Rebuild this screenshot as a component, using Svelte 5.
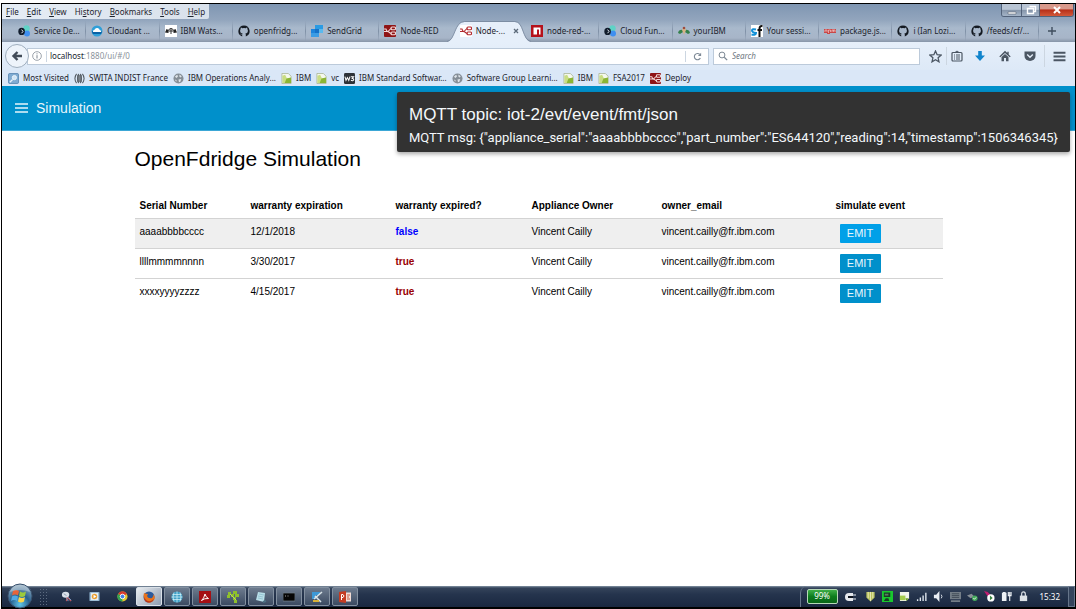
<script>
  const menus = ['File', 'Edit', 'View', 'History', 'Bookmarks', 'Tools', 'Help'];
  const accessIndex = { History: 2 };

  const tabs = [
    { icon: 'cloudfn', label: 'Service De...' },
    { icon: 'cloudant', label: 'Cloudant ...' },
    { icon: 'watson', label: 'IBM Wats...' },
    { icon: 'github', label: 'openfridg...' },
    { icon: 'sendgrid', label: 'SendGrid' },
    { icon: 'nodered', label: 'Node-RED' },
    { icon: 'noderedlight', label: 'Node-...', active: true },
    { icon: 'npm', label: 'node-red-...' },
    { icon: 'cloudfn', label: 'Cloud Fun...' },
    { icon: 'bee', label: 'yourIBM' },
    { icon: 'sf', label: 'Your sessi...' },
    { icon: 'npmwide', label: 'package.js...' },
    { icon: 'github', label: 'i (Ian Lozi...' },
    { icon: 'github', label: '/feeds/cf/...' }
  ];

  const bookmarks = [
    { icon: 'visited', label: 'Most Visited' },
    { icon: 'swita', label: 'SWITA INDIST France' },
    { icon: 'globe', label: 'IBM Operations Analy...' },
    { icon: 'page', label: 'IBM' },
    { icon: 'page', label: 'vc' },
    { icon: 'w3', label: 'IBM Standard Softwar...' },
    { icon: 'globe', label: 'Software Group Learni...' },
    { icon: 'page', label: 'IBM' },
    { icon: 'page', label: 'FSA2017' },
    { icon: 'nodered', label: 'Deploy' }
  ];

  const rows = [
    { serial: 'aaaabbbbcccc', date: '12/1/2018', expired: false, owner: 'Vincent Cailly', email: 'vincent.cailly@fr.ibm.com' },
    { serial: 'llllmmmmnnnn', date: '3/30/2017', expired: true, owner: 'Vincent Cailly', email: 'vincent.cailly@fr.ibm.com' },
    { serial: 'xxxxyyyyzzzz', date: '4/15/2017', expired: true, owner: 'Vincent Cailly', email: 'vincent.cailly@fr.ibm.com' }
  ];

  let selected = $state(0);

  const launchers = ['snip', 'media', 'chrome'];
  const apps = ['firefox', 'sphere', 'pdf', 'cross', 'notes', 'console', 'tools', 'ppt'];
  const tray = ['shield', 'monitor', 'note', 'signal', 'sound', 'device', 'usb', 'update', 'power', 'lock'];
</script>

{#snippet icon(name, size = 12)}
  <svg class="icon" width={size} height={size} viewBox="0 0 12 12" aria-hidden="true">
    {#if name === 'cloudfn'}
      <circle cx="8.5" cy="3.5" r="3.2" fill="#5fd3c6" /><circle cx="9" cy="8.5" r="3" fill="#3f8ff0" />
      <ellipse cx="3.6" cy="6.4" rx="3.3" ry="3.7" fill="#111c2c" /><path d="M3.6 4.6l1.4 1.8-1.4 1.8" fill="none" stroke="#dfe8f0" />
    {:else if name === 'cloudant'}
      <circle cx="6" cy="6" r="5.5" fill="#2f9fd8" /><path d="M1 6q5 2 10 0a5 5 0 0 1-1 3H2q-1-1-1-3z" fill="#0b62a4" /><path d="M2 7q-.5-2 1.500-2.300Q4.500 2.500 6.500 3q2 .3 2.200 2 2 .3 1.500 2z" fill="#fff" />
    {:else if name === 'watson'}
      <rect width="12" height="12" fill="#fff" /><path d="M0 7.500L1.500 4l2 1v3zM12 7.500L10.500 4l-2 1v3z" fill="#222" /><path d="M3.500 5.500Q4 3.500 6 3.500t2.500 2M6 3.500V9M3.500 6h5" fill="none" stroke="#333" />
    {:else if name === 'github'}
      <path d="M6 .5a5.6 5.6 0 0 0-1.8 10.9V9.8C2.600 10.100 2.400 9 2 8.600c.9 0 1.200 1 2.200.8.1-.5.3-.7.5-.9C2.900 8.200 2.100 7.300 2.100 5.700c0-.7.2-1.200.6-1.600-.1-.5-.1-1 .1-1.500.6 0 1.100.3 1.500.6a6 6 0 0 1 3.400 0c.4-.3.9-.6 1.500-.6.2.5.2 1 .1 1.500.4.4.6.9.6 1.600 0 1.600-.8 2.500-2.600 2.800.4.3.5.8.5 1.400v1.500A5.600 5.600 0 0 0 6 .5z" fill="#141a22" />
    {:else if name === 'sendgrid'}
      <path d="M0 4h4v8H0z" fill="#a4dcf5" /><path d="M4 0h8v4H4z" fill="#2a9be3" /><path d="M4 4h4v4H4z" fill="#1571c8" /><path d="M8 4h4v4H8z" fill="#59b9ee" /><path d="M0 8h8v4H0z" fill="#3a9ce5" /><path d="M0 4h4v4H0z" fill="#1c84dc" />
    {:else if name === 'nodered' || name === 'noderedlight'}
      <rect width="12" height="12" rx="1" fill={name === 'nodered' ? '#8f1416' : '#fff'} />
      <g fill="none" stroke={name === 'nodered' ? '#f3dada' : '#b32a2e'} stroke-width="1.1"><path d="M0 6.500h3q1.500 0 2.500-1.500t2-1.500M3 6.500q1.500 0 2.500 1t2 1M0 4h2l1 2.500" /><rect x="7" y="2" width="4.500" height="2.700" rx="1" /><rect x="7" y="7" width="4.500" height="2.700" rx="1" /></g>
    {:else if name === 'npm'}
      <path d="M0 0h12v12H0z" fill="#b5121b" /><path d="M2.500 2.500h7v7H8V4.500H6v5H2.500z" fill="#fff" />
    {:else if name === 'npmwide'}
      <path d="M0 4h12v4H6v1H3V8H0z" fill="#c94747" /><path d="M1 7V5h2v2M4.500 8V5h2v2M8 7V5h3v2M9.500 5v2" fill="none" stroke="#f7dede" stroke-width=".6" />
    {:else if name === 'bee'}
      <path d="M0 8q1-4 5-3v2l-3 2zM12 8q-1-4-5-3v2l3 2z" fill="#35804c" /><path d="M5 3h2l1 2-2 5-2-5z" fill="#d7b389" /><circle cx="6" cy="3" r="1.300" fill="#9e4b3c" />
    {:else if name === 'sf'}
      <path d="M0 0h12v12H0z" fill="#fff" /><path d="M5 4.500q-4-1-4 1t4 2.400q0 2.500-4.500 1.700" fill="none" stroke="#1190d8" stroke-width="2" /><path d="M11.500 1.200Q8.500.500 8.500 4v8M6.500 5h4.500" fill="none" stroke="#111" stroke-width="2" />
    {:else if name === 'visited'}
      <rect x=".5" y=".5" width="11" height="11" rx="1.500" fill="#7fabd2" stroke="#5d8ab5" /><circle cx="7" cy="5" r="2.300" fill="#cfe4f6" stroke="#eef5fb" /><path d="M5 7l-3 3" stroke="#e6f1fa" stroke-width="1.500" />
    {:else if name === 'swita'}
      <path d="M3.500 2h5v8h-5z" fill="#7c848c" /><g fill="none" stroke="#4c545c" stroke-width="1.100"><path d="M2.800 1Q-.8 6 2.800 11M9.200 1q3.600 5 0 10M5 1q-2 5 0 10M7 1q2 5 0 10" /></g>
    {:else if name === 'globe'}
      <circle cx="6" cy="6" r="5.500" fill="#858e97" /><path d="M2 4l2.500-2 1 1.500-1.500 2zM7 1.500l2.500 2-1 1.500-1.500-1zM6 7l3-.5-1 3-1.500.5zM2 7l2 1-.5 1.500z" fill="#dfe5ea" />
    {:else if name === 'page'}
      <path d="M1 .5h7l3 3v8H1z" fill="#f5f8ee" stroke="#a3b08c" stroke-width=".8" /><path d="M1.500 11V3l3-1 2 4h4.500v5z" fill="#c9dd83" /><path d="M6 6l5-1v6H4z" fill="#8bb534" />
    {:else if name === 'w3'}
      <rect width="12" height="12" rx="1.500" fill="#2d3238" /><path d="M1 4l1.200 4L3.700 5l1.500 3L6.500 4M7.500 4h3L9 6q2 0 1.500 1.500T7.500 8" fill="none" stroke="#fff" stroke-width="1.100" />
    {:else if name === 'snip'}
      <path d="M6 6l5 5M7 5l-1 6" stroke="#b8545c" stroke-width="1.500" /><ellipse cx="5" cy="4" rx="4" ry="3.300" fill="#d9e1ea" /><path d="M3 3l3 2" stroke="#8a9aae" /><path d="M6 8l2 3M8 7l3 3" stroke="#7ea4cf" />
    {:else if name === 'media'}
      <rect x=".5" y="1" width="11" height="10" rx="1" fill="#8fb4cf" /><rect x="2" y="2" width="8" height="8" fill="#e6eef2" /><circle cx="6" cy="6" r="3" fill="#e9a034" /><path d="M5 4l3 2-3 2z" fill="#fff" />
    {:else if name === 'chrome'}
      <circle cx="6" cy="6" r="5.500" fill="#e5c62e" /><path d="M6 6L1.200 3.200A5.500 5.500 0 0 1 10.800 3.200z" fill="#d83a2e" /><path d="M6 6L1.200 3.200A5.500 5.500 0 0 0 6 11.500z" fill="#32a350" /><circle cx="6" cy="6" r="2.500" fill="#4481e8" stroke="#fff" />
    {:else if name === 'firefox'}
      <circle cx="6" cy="6" r="5.500" fill="#2c5a9c" /><path d="M1 2q2 1 4 1l-1 2q1 3 5 2 2-2 1-4 3 3 1 6-3 4-7 2Q-.5 8 1 2z" fill="#e9731c" /><path d="M1 6q2 5 7 4l3-2q-2 4-6 3.500T1 6z" fill="#b8361b" />
    {:else if name === 'sphere'}
      <circle cx="6" cy="6" r="5.500" fill="#3f9fc6" /><path d="M6 .5v11M.5 6h11M3 1.500q-2 4.500 0 9M9 1.500q2 4.500 0 9M1.500 3.500h9M1.500 8.500h9" fill="none" stroke="#d9f5fa" stroke-width=".7" />
    {:else if name === 'pdf'}
      <rect width="12" height="12" fill="#a50f14" /><path d="M2.500 9.500Q5 7.500 6 3q.5 3 3.500 4.500Q5.500 7 2.500 9.500" fill="none" stroke="#fff" />
    {:else if name === 'cross'}
      <path d="M1 1h3v3H1zM6 0h4v3H6zM4 3h3v3H4zM8 3h4v3H8zM0 4h3v3H0zM6 6h3v3H6zM7 9h3v3H7z" fill="#8fc02c" /><path d="M3 3l6 6" stroke="#b9dd55" />
    {:else if name === 'notes'}
      <path d="M3 1l7 1-1 9-8-2z" fill="#b9dfe9" /><path d="M4 3l5 1M3 5l5 1M3 7l5 1" stroke="#8cbccc" stroke-width=".8" /><path d="M8 11l3-1" stroke="#4c7083" stroke-width="2" />
    {:else if name === 'console'}
      <rect y="2" width="12" height="8" fill="#050505" stroke="#74808c" stroke-width=".7" /><path d="M2 4l1 1-1 1M4 5h2" fill="none" stroke="#888" stroke-width=".6" />
    {:else if name === 'tools'}
      <path d="M1 1h8v3H5v4H1z" fill="#3d98d6" /><path d="M11 1L3 8M4 5l6 6" stroke="#dae4e8" stroke-width="1.600" /><path d="M2 10h6" stroke="#d7b139" stroke-width="2" />
    {:else if name === 'ppt'}
      <path d="M0 1l7-1v12l-7-1z" fill="#c43b22" /><path d="M7 1.500h5v9H7z" fill="#f1dcd5" /><path d="M2.500 9V3.500h1.500q2 1.500 0 3H2.500" fill="none" stroke="#fff" /><path d="M8 4h3M8 6h2M8 8h3" stroke="#c45c47" />
    {:else if name === 'shield'}
      <path d="M1.500 1h9v6L6 11.500 1.500 7z" fill="#b8c25e" /><path d="M6 1v10M3.500 1v7M8.500 1v7" stroke="#ebe9b8" />
    {:else if name === 'monitor'}
      <path d="M0 0h12v12H0z" fill="#19c82e" /><path d="M2 1.500h7v5H2zM4 8h3l1 3H2z" fill="#173b23" /><path d="M3 3h4v2H3z" fill="#5c7a64" />
    {:else if name === 'note'}
      <path d="M1 1h10v7l-3 3H1z" fill="#f2f5ea" /><path d="M1 5h6v5H1z" fill="#a5cd4c" /><path d="M7 8h4L8 11z" fill="#6a9c28" />
    {:else if name === 'signal'}
      <path d="M1 11V9h1.500v2zM4 11V7h1.500v4zM7 11V5h1.500v6zM10 11V2h1.500v9z" fill="#dfe6ee" />
    {:else if name === 'sound'}
      <path d="M1 4h2.500L7 0v12L3.500 8H1z" fill="#e9eef4" /><path d="M9 4q1.500 2 0 4" fill="none" stroke="#dfe6ee" />
    {:else if name === 'device'}
      <path d="M0 1h12v8H0zM1 10h10v2H1z" fill="#737d87" /><path d="M2 3h8M2 5h8M2 7h8" stroke="#3f4955" />
    {:else if name === 'usb'}
      <path d="M0 5l5-2 3 3-4 2z" fill="#899097" /><circle cx="8.500" cy="8" r="3" fill="#43a95b" /><path d="M7 8l1 1 2-2" fill="none" stroke="#fff" />
    {:else if name === 'update'}
      <path d="M0 0l4 1 4 4-4 1z" fill="#c01c70" /><circle cx="7.500" cy="7.500" r="4" fill="#fff" /><path d="M6.500 5l3 2.500-3 2.500z" fill="#37833f" />
    {:else if name === 'power'}
      <path d="M1 2h5v9H1zM2 1h3v1H2z" fill="#edf1f5" /><path d="M9.500 1v10M8 1v4h3V1" fill="none" stroke="#edf1f5" stroke-width="1.200" />
    {:else if name === 'lock'}
      <path d="M4 6V3.500Q4 1 6 1t2 2.500V6" fill="none" stroke="#dce1e6" stroke-width="1.300" /><rect x="2" y="5" width="8" height="6" fill="#dce1e6" />
    {:else if name === 'back'}
      <path d="M11 6H3M6.500 2L2.500 6l4 4" fill="none" stroke="#414b58" stroke-width="2.400" />
    {:else if name === 'info'}
      <circle cx="6" cy="6" r="5.200" fill="none" stroke="#7c858f" stroke-width=".9" /><path d="M6 5v4M6 2.800v1.200" stroke="#7c858f" stroke-width="1.200" />
    {:else if name === 'reload'}
      <path d="M9.800 8A4.200 4.200 0 1 1 9 3.200" fill="none" stroke="#7d8996" stroke-width="1.500" /><path d="M10.800 1v4.300H6.500z" fill="#7d8996" />
    {:else if name === 'search'}
      <circle cx="4.800" cy="4.800" r="3.500" fill="none" stroke="#7c8894" stroke-width="1.200" /><path d="M7.500 7.500l3.500 3.500" stroke="#7c8894" stroke-width="1.500" />
    {:else if name === 'star'}
      <path d="M6 .9l1.500 3.400 3.700.4-2.800 2.500.8 3.700L6 9l-3.200 1.900.8-3.700L.8 4.700l3.700-.4z" fill="none" stroke="#4b5663" stroke-width="1.200" />
    {:else if name === 'clipboard'}
      <rect x="1" y="2.500" width="10" height="8.500" rx="1" fill="none" stroke="#4b5663" stroke-width="1.200" /><path d="M4 2.500q2-3 4 0M3 5h1M5 5h4M3 7h1M5 7h4M3 9h1M5 9h4" fill="none" stroke="#4b5663" />
    {:else if name === 'download'}
      <path d="M4.200 1h3.600v4.500H11L6 11 1 5.500h3.200z" fill="#1184cc" />
    {:else if name === 'home'}
      <path d="M6 .8L.3 6.500l1 .8L6 3l4.700 4.300 1-.8-2-2V1.800H8.300v1.300z" fill="#4b5663" /><path d="M2.500 7L6 4l3.500 3v4.200H7V8H5v3.200H2.500z" fill="#4b5663" />
    {:else if name === 'pocket'}
      <path d="M.5 1.500h11V6a5.500 5 0 0 1-11 0z" fill="#4b5663" /><path d="M3.200 4.500L6 7.200l2.800-2.700" fill="none" stroke="#e4edf8" stroke-width="1.400" />
    {:else if name === 'menu'}
      <path d="M.5 2.500h11M.5 6h11M.5 9.500h11" stroke="#4b5663" stroke-width="1.800" />
    {/if}
  </svg>
{/snippet}

<div class="screen">
  <header class="browser">
    <div class="titlebar">
      <nav class="menus" aria-label="Menu bar">
        {#each menus as name}
          {@const i = accessIndex[name] ?? 0}
          <button>{name.slice(0, i)}<u>{name[i]}</u>{name.slice(i + 1)}</button>
        {/each}
      </nav>
      <div class="window">
        <button class="min" aria-label="Minimize"><svg width="16" height="12" viewBox="0 0 16 12"><path d="M4 8h8v2H4z" fill="#fff" stroke="#5d6774" stroke-width=".6" /></svg></button>
        <button class="max" aria-label="Restore"><svg width="16" height="12" viewBox="0 0 16 12"><path d="M6.500 2.500h6v5h-2M4.500 4.500h6v5h-6z" fill="none" stroke="#fff" stroke-width="1.400" /></svg></button>
        <button class="close" aria-label="Close"><svg width="16" height="12" viewBox="0 0 16 12"><path d="M5 3l6 6M11 3l-6 6" stroke="#fff" stroke-width="2" /></svg></button>
      </div>
    </div>

    <div class="tabs">
      {#each tabs as tab}
        <div class="tab" class:active={tab.active}>
          {#if tab.active}
            <svg class="shape" viewBox="0 0 82 21" preserveAspectRatio="none" aria-hidden="true">
              <path d="M0 21C8 20 7 1 17 1H66c9 0 7 19 16 20z" fill="#e6effa" />
              <path d="M0 20.500C8 20 7 .5 17 .5H66c9 0 7 19 16 20" fill="none" stroke="#75869c" stroke-width=".8" />
            </svg>
          {/if}
          <button class="label">{@render icon(tab.icon)}<span>{tab.label}</span></button>
          {#if tab.active}<button class="x" aria-label="Close tab"><svg width="6" height="6" viewBox="0 0 6 6"><path d="M1 1l4 4M5 1L1 5" stroke="#5c6a7a" stroke-width="1.300" /></svg></button>{/if}
        </div>
      {/each}
      <button class="newtab" aria-label="New tab"><svg width="8" height="8" viewBox="0 0 8 8"><path d="M4 0v8M0 4h8" stroke="#3f4d5e" stroke-width="1.400" /></svg></button>
    </div>

    <div class="toolbar">
      <button class="back" aria-label="Back">{@render icon('back')}</button>
      <div class="url">
        {@render icon('info', 10)}
        <i></i>
        <label for="address">localhost</label>
        <input id="address" value=":1880/ui/#/0" />
        <i></i>
        <button class="reload" aria-label="Reload">{@render icon('reload', 9)}</button>
      </div>
      <label class="search">{@render icon('search', 10)}<input placeholder="Search" aria-label="Search" /></label>
      <div class="actions">
        <button aria-label="Bookmark">{@render icon('star', 13)}</button>
        <i></i>
        <button aria-label="Library">{@render icon('clipboard')}</button>
        <button aria-label="Downloads">{@render icon('download')}</button>
        <button aria-label="Home">{@render icon('home')}</button>
        <button aria-label="Pocket">{@render icon('pocket')}</button>
        <i></i>
        <button aria-label="Open menu">{@render icon('menu', 13)}</button>
      </div>
    </div>

    <nav class="bookmarks" aria-label="Bookmarks">
      {#each bookmarks as mark}
        <a href="#/">{@render icon(mark.icon, 11)}<span>{mark.label}</span></a>
      {/each}
    </nav>
  </header>

  <div class="page">
    <header class="appbar">
      <button aria-label="Menu"><svg width="13" height="10" viewBox="0 0 13 10"><path d="M0 1h13M0 5h13M0 9h13" stroke="#e6f5fc" stroke-width="1.300" /></svg></button>
      <span>Simulation</span>
    </header>

    <div class="toast" role="status">
      <h2>MQTT topic: iot-2/evt/event/fmt/json</h2>
      <p>{'MQTT msg: {"appliance_serial":"aaaabbbbcccc","part_number":"ES644120","reading":14,"timestamp":1506346345}'}</p>
    </div>

    <main>
      <h1>OpenFdridge Simulation</h1>
      <table>
        <colgroup>
          <col class="c1" /><col class="c2" /><col class="c3" /><col class="c4" /><col class="c5" /><col class="c6" />
        </colgroup>
        <thead>
          <tr><th>Serial Number</th><th>warranty expiration</th><th>warranty expired?</th><th>Appliance Owner</th><th>owner_email</th><th>simulate event</th></tr>
        </thead>
        <tbody>
          {#each rows as row, i}
            <tr class:selected={selected === i}>
              <td>{row.serial}</td>
              <td>{row.date}</td>
              <td><b class:expired={row.expired}>{row.expired}</b></td>
              <td>{row.owner}</td>
              <td>{row.email}</td>
              <td class="action"><button onclick={() => (selected = i)}>EMIT</button></td>
            </tr>
          {/each}
        </tbody>
      </table>
    </main>
  </div>

  <footer class="taskbar">
    <button class="start" aria-label="Start">
      <svg width="26" height="26" viewBox="0 0 26 26">
        <defs>
          <radialGradient id="orb" cx="50%" cy="85%" r="80%"><stop offset="0" stop-color="#5fc6ea" /><stop offset=".5" stop-color="#27608f" /><stop offset="1" stop-color="#8ea9bd" /></radialGradient>
        </defs>
        <circle cx="13" cy="13" r="12" fill="url(#orb)" stroke="#38506c" />
        <path d="M6 8q3-2 6 0l-1 4.500q-3-2-6 0z" fill="#e9643a" /><path d="M13 8.500q3 2 6 0l-1 4.500q-3 2-6 0z" fill="#9ccb3c" />
        <path d="M5 13.500q3-2 6 0L10 18q-3-2-6 0z" fill="#52a8e4" /><path d="M12 14q3 2 6 0l-1 4.500q-3 2-6 0z" fill="#fbd648" />
        <path d="M3 9a10.500 10.500 0 0 1 20 0q-10-4-20 0z" fill="#fff" opacity=".3" />
      </svg>
    </button>
    <span class="grip"></span>
    <div class="launch">
      {#each launchers as name}<button aria-label={name}>{@render icon(name, 11)}</button>{/each}
    </div>
    <div class="apps">
      {#each apps as name, i}<button class:current={i === 0} aria-label={name}>{@render icon(name)}</button>{/each}
    </div>
    <div class="tray">
      <div class="battery"><span>99%</span></div>
      <svg class="plug" width="12" height="10" viewBox="0 0 12 10" aria-hidden="true"><path d="M1 5a4 4 0 0 1 4-4h4v8H5a4 4 0 0 1-4-4z" fill="#e6e9ee" /><path d="M9 3h3M9 7h3" stroke="#e6e9ee" stroke-width="1.200" /><path d="M4 5h5" stroke="#10161f" stroke-width="2" /></svg>
      <div class="status">
        {#each tray as name}<button aria-label={name}>{@render icon(name, 11)}</button>{/each}
      </div>
      <time>15:32</time>
      <button class="desktop" aria-label="Show desktop"></button>
    </div>
  </footer>
</div>

<style>
  :global(body) { background: #fff; }
  .screen {
    box-sizing: border-box;
    min-height: 100vh;
    border: 1px solid #000;
    border-top: 0;
    margin-left: 1px;
    display: flex;
    flex-direction: column;
    font-family: "Liberation Sans", Arial, sans-serif;
    color: #000;
  }
  .screen::before {
    content: "";
    height: 3px;
    background: #fff;
    border-bottom: 1px solid #000;
    margin: 0 -1px;
  }
  button {
    border: 0;
    padding: 0;
    margin: 0;
    background: none;
    font: inherit;
    color: inherit;
  }
  input {
    border: 0;
    padding: 0;
    min-width: 0;
    background: none;
    font: inherit;
    outline: 0;
  }
  svg { display: block; flex: none; }

  .browser {
    font: 8px/12px "Noto Sans", "Open Sans", sans-serif;
    color: #1c232c;
    background: linear-gradient(#7f96b2 0, #92a5bd 16px, #a9b9cc 24px, #a7b5c8 34px, #8795a8 38px);
  }
  .titlebar {
    height: 15px;
    display: flex;
    justify-content: space-between;
  }
  .menus {
    display: flex;
    gap: 8px;
    padding: 0 4px;
    background: linear-gradient(90deg, #e6edf5, #d9e1eb);
    border-radius: 0 0 2px 0;
  }
  .window {
    display: flex;
    height: 12px;
    margin-right: 1px;
    border-radius: 0 0 3px 3px;
    overflow: hidden;
    border: 1px solid #52627a;
    border-top: 0;
  }
  .window button {
    width: 18px;
    display: grid;
    place-items: center;
    background: linear-gradient(#b9c5d4 45%, #8494a9 50%, #a5b5c8);
    border-right: 1px solid #52627a;
  }
  .window .min { width: 20px; }
  .window .close {
    width: 33px;
    border: 0;
    background: linear-gradient(#d99a8c 40%, #b7301a 50%, #d2593a);
  }

  .tabs {
    display: flex;
    height: 23px;
    padding-left: 11px;
    box-sizing: border-box;
  }
  .tab {
    flex: 1 1 0;
    min-width: 0;
    display: flex;
    align-items: center;
    position: relative;
    border-right: 1px solid #8797ac;
    border-image: linear-gradient(transparent 10%, #7f90a6, transparent 95%) 1;
  }
  .tab:has(+ .active), .tab.active { border-color: transparent; border-image: none; }
  .label {
    position: relative;
    display: flex;
    align-items: center;
    gap: 4px;
    padding-left: 5px;
    min-width: 0;
    white-space: nowrap;
  }
  .shape {
    position: absolute;
    left: -6px;
    top: 2px;
    width: calc(100% + 12px);
    height: 21px;
  }
  .active .label { padding-left: 7px; }
  .x { position: relative; margin: 0 6px 0 auto; }
  .newtab {
    width: 36px;
    display: grid;
    place-items: center;
    padding-right: 10px;
  }

  .toolbar {
    height: 28px;
    display: flex;
    align-items: center;
    padding: 0 2px 0 3px;
    background: linear-gradient(#e6effa, #dde9f7);
  }
  .back {
    width: 24px;
    height: 24px;
    box-sizing: border-box;
    border: 1px solid #9faebe;
    border-radius: 50%;
    background: #eef4fb;
    display: grid;
    place-items: center;
    z-index: 1;
  }
  .toolbar i {
    width: 1px;
    align-self: stretch;
    margin: 2px 0;
    background: #ccd6e1;
  }
  .url, .search {
    box-sizing: border-box;
    height: 17px;
    display: flex;
    align-items: center;
    background: #fff;
    border: 1px solid #bccada;
  }
  .url {
    flex: 1;
    margin-left: -2px;
    padding-left: 4px;
    color: #20262e;
  }
  .url label { margin-left: 3px; }
  .url i:first-of-type { margin-left: 4px; }
  .url input { flex: 1; color: #8b939c; }
  .reload { width: 22px; display: grid; place-items: center; }
  .search { width: 207px; margin-left: 4px; padding-left: 4px; gap: 4px; }
  .search input { flex: 1; font-style: italic; }
  .search input::placeholder { color: #6e7781; opacity: 1; }
  .actions {
    display: flex;
    align-items: center;
    height: 22px;
    margin-left: 5px;
  }
  .actions button { width: 25px; display: grid; place-items: center; }
  .actions button:first-child { width: 21px; }
  .actions button:nth-child(3) { width: 20px; }
  .actions i:last-of-type { margin: 0 0 0 2px; }
  .actions button:last-child { width: 28px; }

  .bookmarks {
    height: 16px;
    display: flex;
    align-items: center;
    gap: 5px;
    padding: 0 6px;
    background: #dae7f7;
    white-space: nowrap;
  }
  .bookmarks a {
    display: flex;
    align-items: center;
    gap: 4px;
    color: inherit;
    text-decoration: none;
  }

  .page { flex: 1; position: relative; }
  .appbar {
    height: 45px;
    box-sizing: border-box;
    border-bottom: 1px solid #3ba7d6;
    display: flex;
    align-items: center;
    gap: 8px;
    padding: 0 13px;
    background: #0090cb;
    color: #e6f5fc;
    font-size: 14px;
  }
  .toast {
    position: absolute;
    top: 6px;
    right: 5px;
    box-sizing: border-box;
    padding: 13px 12px 4px;
    background: #323232;
    color: #f4f8fb;
    border-radius: 2px;
    box-shadow: 0 2px 4px rgba(0, 0, 0, .35);
    white-space: nowrap;
  }
  .toast h2 {
    margin: 0 0 3px;
    font: 17px/20px "Liberation Sans", Arial, sans-serif;
  }
  .toast p { margin: 0; font: 13px/20px Roboto, Arial, sans-serif; }

  main { max-width: 808px; margin: 0 auto; padding-top: 15px; }
  h1 { margin: 0; font-size: 21px; line-height: 26px; font-weight: 400; }
  table {
    width: 100%;
    margin-top: 20px;
    table-layout: fixed;
    border-collapse: collapse;
    font-size: 10px;
    line-height: 12px;
  }
  .c1 { width: 111px; }
  .c2 { width: 145px; }
  .c3 { width: 136px; }
  .c4 { width: 130px; }
  .c5 { width: 174px; }
  .c6 { width: 112px; }
  th, td {
    box-sizing: border-box;
    text-align: left;
    vertical-align: top;
    padding: 7px 0 0 5px;
    border-bottom: 1px solid #d3d3d3;
    height: 30px;
  }
  th { height: 26px; padding-top: 8px; }
  tr:last-child td { border: 0; }
  .selected td { background: #efefef; }
  b { color: #00f; }
  b.expired { color: #900; }
  td.action { padding: 5px 0 0 9px; }
  .action button {
    display: block;
    width: 41px;
    height: 19px;
    background: #0090cb;
    color: #eaf6fc;
    font-size: 11px;
    border-radius: 1px;
  }
  .selected .action button { background: #00a0e8; }

  .taskbar {
    height: 21px;
    display: flex;
    align-items: stretch;
    background: linear-gradient(#8595a5 0, #34435a 2px, #25344d 40%, #1a2840);
    border-bottom: 1px solid #000;
  }
  .start { width: 26px; margin-left: 5px; }
  .start svg { margin: -4px 0 -2px; }
  .grip {
    width: 7px;
    margin: 3px 5px 2px 7px;
    background: repeating-linear-gradient(#5c6b80 0 1px, transparent 1px 3px);
    -webkit-mask: repeating-linear-gradient(90deg, #000 0 1px, transparent 1px 3px);
    mask: repeating-linear-gradient(90deg, #000 0 1px, transparent 1px 3px);
  }
  .launch { display: flex; }
  .launch button { width: 28px; display: grid; place-items: center; }
  .apps { display: flex; gap: 2px; padding: 1px 0; }
  .apps button {
    box-sizing: border-box;
    width: 26px;
    display: grid;
    place-items: center;
    border: 1px solid #8390a0;
    border-radius: 2px;
    background: linear-gradient(#6d7b8e, #3b4a61);
  }
  .apps .current { background: linear-gradient(135deg, #e8ecf0, #8f9db0); border-color: #d9e0e7; }
  .tray {
    margin-left: auto;
    padding-left: 6px;
    border-left: 1px solid #66758a;
    border-radius: 7px 0 0 0;
    display: flex;
    align-items: center;
    color: #fff;
    font: 8px/12px "Noto Sans", "Open Sans", sans-serif;
  }
  .battery {
    box-sizing: border-box;
    width: 31px;
    height: 15px;
    border: 1px solid #b7d9b8;
    border-radius: 2px;
    background: linear-gradient(#3fae48, #0c7d1d 50%, #0a6518);
    text-align: center;
  }
  .plug { margin: 0 6px; }
  .status { display: flex; }
  .status button { width: 17px; display: grid; place-items: center; }
  time { margin: 0 8px; }
  .desktop {
    align-self: stretch;
    width: 7px;
    border: 1px solid #66758a;
    background: #35445c;
  }
</style>
